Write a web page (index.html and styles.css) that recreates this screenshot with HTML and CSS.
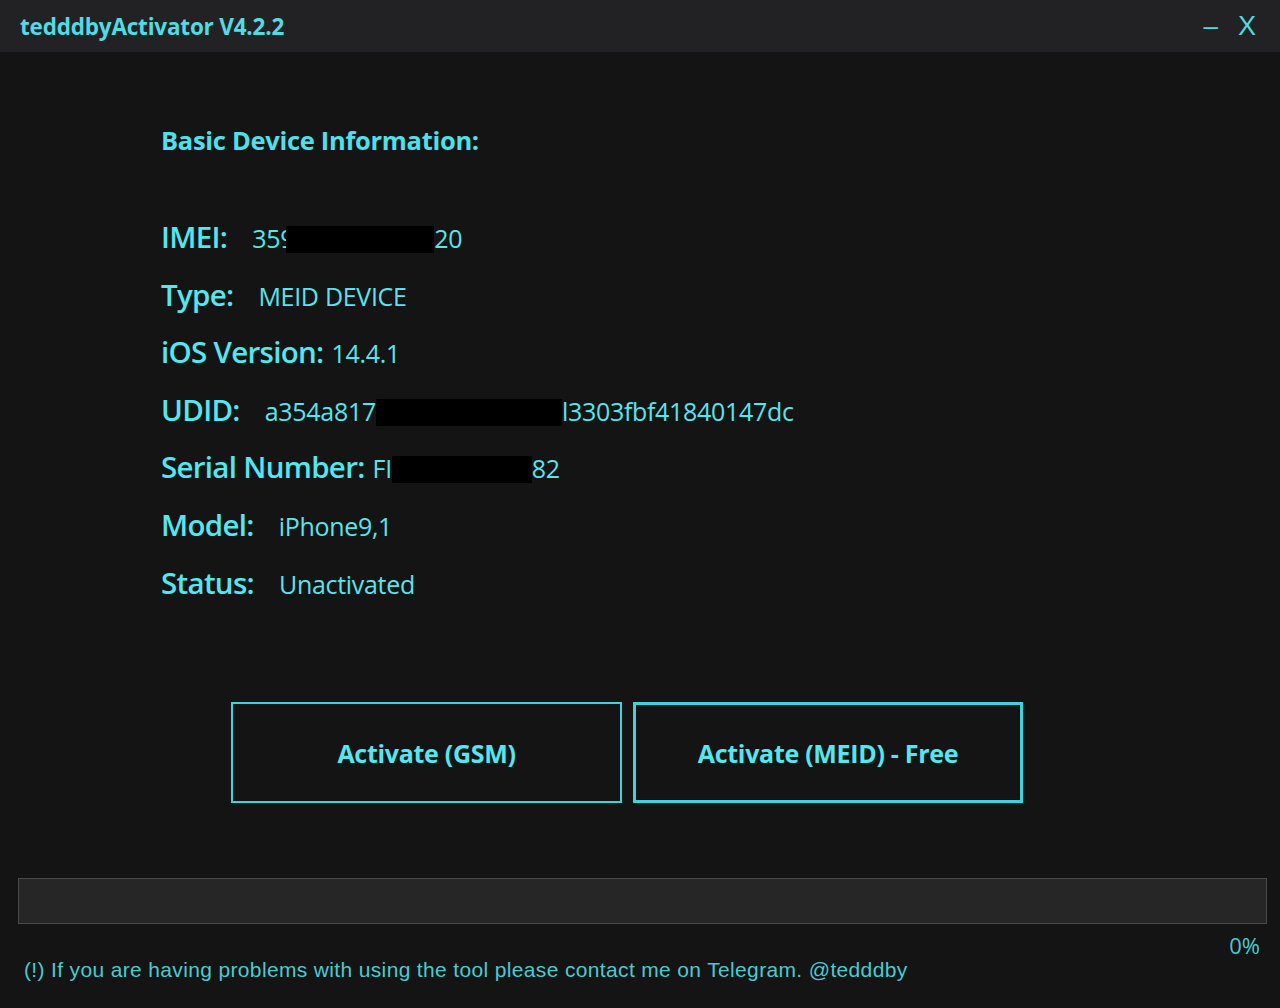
FILE: index.html
```html
<!DOCTYPE html>
<html lang="en">
<head>
    <meta charset="UTF-8">
    <title>tedddbyActivator V4.2.2</title>
    <link rel="stylesheet" href="styles.css">
</head>
<body>
    <div class="window">
        <!-- title bar -->
        <div class="titlebar">
            <span class="title">tedddbyActivator V4.2.2</span>
            <div class="controls">
                <span class="min">&ndash;</span>
                <span class="close">X</span>
            </div>
        </div>

        <div class="content">
            <h2>Basic Device Information:</h2>

            <div class="info">
                <div class="row">
                    <span class="label">IMEI:</span>
                    <span class="value">359<span class="hide imei"></span>20</span>
                </div>
                <div class="row">
                    <span class="label">Type:</span>
                    <span class="value">MEID DEVICE</span>
                </div>
                <div class="row">
                    <span class="label">iOS Version:</span>
                    <span class="value tight">14.4.1</span>
                </div>
                <div class="row">
                    <span class="label">UDID:</span>
                    <span class="value">a354a817<span class="hide udid"></span>l3303fbf41840147dc</span>
                </div>
                <div class="row">
                    <span class="label">Serial Number:</span>
                    <span class="value tight">FI<span class="hide serial"></span>82</span>
                </div>
                <div class="row">
                    <span class="label">Model:</span>
                    <span class="value">iPhone9,1</span>
                </div>
                <div class="row">
                    <span class="label">Status:</span>
                    <span class="value">Unactivated</span>
                </div>
            </div>

            <div class="buttons">
                <button class="btn">Activate (GSM)</button>
                <button class="btn active">Activate (MEID) - Free</button>
            </div>
        </div>

        <!-- progress -->
        <div class="footer">
            <div class="progress"></div>
            <div class="percent">0%</div>
            <div class="note">(!) If you are having problems with using the tool please contact me on Telegram. @tedddby</div>
        </div>
    </div>
</body>
</html>
```

FILE: styles.css
```css
html, body {
    margin: 0;
    height: 100%;
    background-color: #141414;
}
body {
    font-family: "Open Sans", "Noto Sans", sans-serif;
    color: #55e6ef;
}
.window {
    height: 1008px;
    display: flex;
    flex-direction: column;
}
.titlebar {
    height: 52px;
    background-color: #222225;
    display: flex;
    align-items: center;
    justify-content: space-between;
    padding: 0 20px;
}
.title {
    font-size: 22.5px;
    font-weight: bold;
    color: #52dbe3;
    letter-spacing: -0.2px;
}
.controls {
    display: flex;
    gap: 20px;
    align-items: center;
    color: #4fd9e2;
    font-family: "Liberation Sans", sans-serif;
}
.min {
    font-size: 26px;
}
.close {
    font-size: 27px;
    margin-right: 4px;
}
.content {
    padding-left: 161px;
    flex: 1;
}
h2 {
    margin: 71px 0 0 0;
    font-size: 25.5px;
    font-weight: bold;
    line-height: 34px;
    color: #4fe0ea;
    letter-spacing: -0.3px;
}
.info {
    margin-top: 59px;
}
.row {
    display: flex;
    align-items: baseline;
    height: 57.6px;
}
.label {
    font-size: 29.5px;
    font-weight: 600;
    letter-spacing: -0.7px;
}
.value {
    font-size: 25px;
    margin-left: 25px;
    color: #5be4ec;
    letter-spacing: -0.3px;
}
.value.tight {
    margin-left: 8px;
}
.hide {
    display: inline-block;
    background-color: #000;
    height: 27px;
    vertical-align: -5px;
}
.imei {
    width: 148px;
    margin-left: -8px;
}
.udid {
    width: 186px;
}
.serial {
    width: 140px;
}
.buttons {
    display: flex;
    gap: 11px;
    margin: 83px 0 0 70px;
}
.btn {
    width: 391px;
    height: 101px;
    background-color: #141414;
    border: 2px solid #3fd3de;
    color: #55e6ef;
    font-family: "Open Sans", "Noto Sans", sans-serif;
    font-size: 25px;
    font-weight: bold;
    letter-spacing: -0.3px;
    cursor: pointer;
}
.btn.active {
    border-width: 3px;
    width: 390px;
    box-shadow: inset 0 0 0 1px #0e0e0e;
}
.footer {
    padding: 0 13px 26px 18px;
}
.progress {
    height: 44px;
    background-color: #262626;
    border: 1px solid #4a4a4a;
}
.percent {
    text-align: right;
    font-size: 22px;
    color: #4cc9d3;
    margin-top: 6px;
    padding-right: 7px;
    height: 24px;
}
.note {
    font-family: "Liberation Sans", Arial, sans-serif;
    font-size: 21px;
    letter-spacing: 0.35px;
    color: #4cc9d3;
    padding-left: 6px;
    margin-top: 4px;
}
```
